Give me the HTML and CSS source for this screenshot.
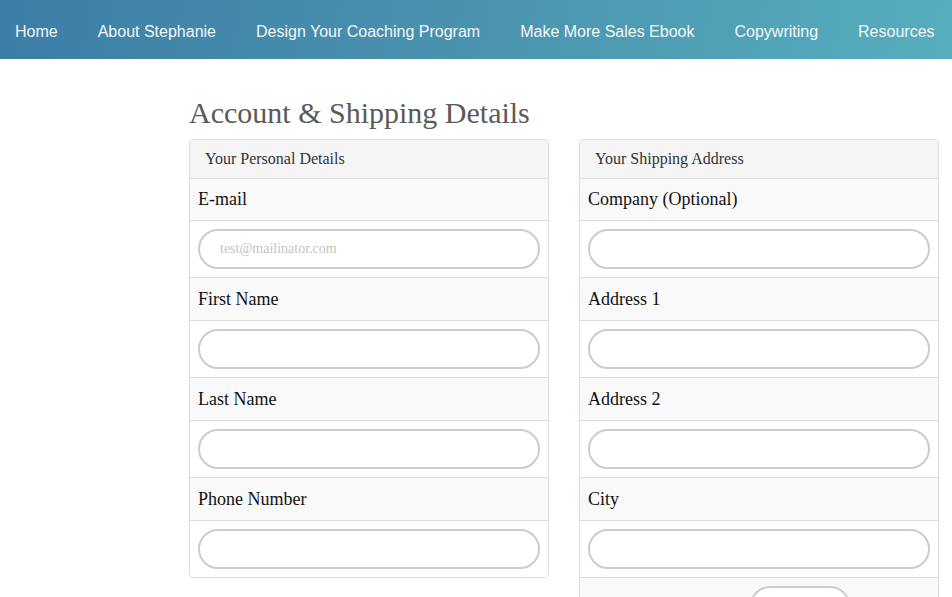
FILE: index.html
```html
<!DOCTYPE html>
<html>
<head>
<meta charset="utf-8">
<link rel="stylesheet" href="styles.css">
</head>
<body>
<nav class="topnav">
  <a href="#">Home</a>
  <a href="#">About Stephanie</a>
  <a href="#">Design Your Coaching Program</a>
  <a href="#">Make More Sales Ebook</a>
  <a href="#">Copywriting</a>
  <a href="#">Resources</a>
</nav>
<main class="page">
  <h1 class="title">Account &amp; Shipping Details</h1>
  <div class="cols">
    <section class="panel">
      <div class="panel-heading">Your Personal Details</div>
      <div class="row label-row first">E-mail</div>
      <div class="row input-row"><input class="field" type="text" placeholder="test@mailinator.com"></div>
      <div class="row label-row">First Name</div>
      <div class="row input-row"><input class="field" type="text"></div>
      <div class="row label-row">Last Name</div>
      <div class="row input-row"><input class="field" type="text"></div>
      <div class="row label-row">Phone Number</div>
      <div class="row input-row last"><input class="field" type="text"></div>
    </section>
    <section class="panel">
      <div class="panel-heading">Your Shipping Address</div>
      <div class="row label-row first">Company (Optional)</div>
      <div class="row input-row"><input class="field" type="text"></div>
      <div class="row label-row">Address 1</div>
      <div class="row input-row"><input class="field" type="text"></div>
      <div class="row label-row">Address 2</div>
      <div class="row input-row"><input class="field" type="text"></div>
      <div class="row label-row">City</div>
      <div class="row input-row"><input class="field" type="text"></div>
      <div class="row label-row select-row"><span class="pill"></span></div>
    </section>
  </div>
</main>
</body>
</html>
```
FILE: styles.css
```css
html, body {
  margin: 0;
  padding: 0;
  background: #fff;
  overflow: hidden;
}
body {
  font-family: "Liberation Serif", "Times New Roman", serif;
  color: #111;
}
.topnav {
  height: 59px;
  box-sizing: border-box;
  display: flex;
  align-items: center;
  gap: 40px;
  padding-left: 15px;
  padding-top: 4px;
  background: linear-gradient(100deg, #3c7ea6 0%, #4a93ae 50%, #56aebe 100%);
  white-space: nowrap;
}
.topnav a {
  font-family: "Liberation Sans", Arial, sans-serif;
  font-size: 16px;
  color: #f4f6f8;
  text-decoration: none;
  line-height: 20px;
}
.page {
  padding-left: 189px;
}
.title {
  margin: 36px 0 8px;
  font-weight: normal;
  font-size: 30px;
  line-height: 36px;
  color: #5a5a5a;
}
.cols {
  display: grid;
  grid-template-columns: 360px 360px;
  gap: 30px;
  align-items: start;
}
.panel {
  border: 1px solid #ddd;
  border-radius: 4px;
  background: #fff;
  overflow: hidden;
}
.panel-heading {
  background: #f5f5f5;
  padding: 10px 15px;
  font-size: 16px;
  line-height: 18px;
  color: #333;
  border-bottom: 1px solid #ddd;
}
.row {
  border-bottom: 1px solid #ddd;
}
.row.last {
  border-bottom: none;
}
.label-row {
  background: #f9f9f9;
  padding: 9px 8px;
  font-size: 18px;
  line-height: 24px;
}
.label-row.first {
  padding-top: 8px;
}
.input-row {
  padding: 8px;
  background: #fff;
}
.field {
  display: block;
  box-sizing: border-box;
  width: 100%;
  height: 40px;
  border: 2px solid #ccc;
  border-radius: 20px;
  padding: 0 20px;
  font-family: "Liberation Serif", "Times New Roman", serif;
  font-size: 14px;
  color: #333;
  background: #fff;
  outline: none;
}
.field::placeholder {
  color: #c4c4c4;
}
.select-row {
  display: flex;
  padding: 8px 8px 8px 170px;
  height: 40px;
}
.pill {
  display: block;
  box-sizing: border-box;
  width: 100px;
  height: 40px;
  border: 2px solid #ccc;
  border-radius: 20px;
  background: #fff;
}
```
